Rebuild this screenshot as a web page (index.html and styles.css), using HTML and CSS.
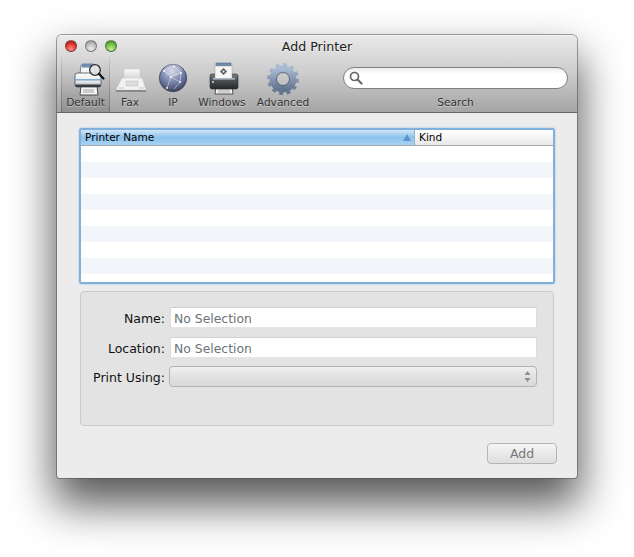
FILE: index.html
```html
<!DOCTYPE html>
<html lang="en">
<head>
<meta charset="utf-8">
<title>Add Printer</title>
<link rel="stylesheet" href="styles.css">
</head>
<body>
<main class="window">
  <header class="chrome">
    <div class="titlebar">
      <div class="lights">
        <span class="light light-red"></span>
        <span class="light light-grey"></span>
        <span class="light light-green"></span>
      </div>
      <h1 class="title">Add Printer</h1>
    </div>
    <div class="toolbar">
      <div class="tool tool-default">
        <svg class="tool-icon" viewBox="0 0 40 38">
          <defs>
            <linearGradient id="pb" x1="0" y1="0" x2="0" y2="1"><stop offset="0" stop-color="#fdfdfd"/><stop offset=".6" stop-color="#e8eaec"/><stop offset="1" stop-color="#a8aaac"/></linearGradient>
            <linearGradient id="pd" x1="0" y1="0" x2="0" y2="1"><stop offset="0" stop-color="#7a7f85"/><stop offset=".45" stop-color="#4b4f54"/><stop offset="1" stop-color="#26282b"/></linearGradient>
            <radialGradient id="gl" cx=".45" cy=".25" r=".85"><stop offset="0" stop-color="#c9cfe2"/><stop offset=".5" stop-color="#7581a8"/><stop offset="1" stop-color="#2c3148"/></radialGradient>
            <linearGradient id="gr" x1="0" y1="0" x2="0" y2="1"><stop offset="0" stop-color="#a9bad2"/><stop offset="1" stop-color="#63768f"/></linearGradient>
            <linearGradient id="fx" x1="0" y1="0" x2="0" y2="1"><stop offset="0" stop-color="#fafafa"/><stop offset="1" stop-color="#d6d6d6"/></linearGradient>
          </defs>
          <path d="M15 5h13l1 9H14z" fill="#f2f4f6" stroke="#56667c" stroke-width=".8"/>
          <rect x="16" y="3.500" width="11" height="4" fill="#6f8bab"/>
          <path d="M15 26h16l1 9H14z" fill="#f4f4f4" stroke="#3c3c3c" stroke-width=".9"/>
          <path d="M17 30h11M17 32h11" stroke="#a4a4a4"/>
          <rect x="9" y="13" width="26" height="14" rx="2.500" fill="url(#pb)" stroke="#4a4c50" stroke-width=".8"/>
          <rect x="9.500" y="19" width="25" height="1.600" fill="#86aece"/>
          <rect x="9.500" y="24.500" width="25" height="2.500" fill="#3a3c40"/>
          <circle cx="29" cy="10" r="5.300" fill="#e4e9ee" fill-opacity=".85" stroke="#2a2c2f" stroke-width="1.300"/>
          <path d="M33 14l4.500 4.500" stroke="#111" stroke-width="2.200" stroke-linecap="round"/>
        </svg>
        <span class="tool-label">Default</span>
      </div>
      <div class="tool tool-fax">
        <svg class="tool-icon" viewBox="0 0 40 38">
          <rect x="14" y="9" width="16" height="10" fill="url(#fx)" stroke="#c8c8c8" stroke-width=".5"/>
          <path d="M12 18h20l4 12H6z" fill="#f3f3f3" stroke="#cdcdcd" stroke-width=".5"/>
          <rect x="16" y="21" width="12" height="5" fill="#dedede" stroke="#bababa" stroke-width=".5"/>
          <rect x="6" y="30" width="30" height="2" fill="#8a8a8a"/>
          <path d="M9 28h5M29 28h5" stroke="#c2c2c2"/>
        </svg>
        <span class="tool-label">Fax</span>
      </div>
      <div class="tool tool-ip">
        <svg class="tool-icon" viewBox="0 0 40 38">
          <circle cx="20" cy="18" r="13.700" fill="url(#gl)" stroke="#2c3049" stroke-width=".6"/>
          <ellipse cx="20" cy="10" rx="9" ry="6" fill="#fff" fill-opacity=".22"/>
          <path d="M11 11l10-5 7 7-10 4-7-6zM18 17l-4 11M18 17l9 5 1-9M27 22l-6 7" fill="none" stroke="#e6eaf6" stroke-width=".5"/>
          <circle cx="21" cy="6.500" r=".9" fill="#fff"/><circle cx="11" cy="11" r=".9" fill="#fff"/><circle cx="28" cy="13" r=".9" fill="#fff"/><circle cx="18" cy="17" r=".9" fill="#fff"/><circle cx="27" cy="22" r=".9" fill="#fff"/><circle cx="14" cy="28" r=".9" fill="#fff"/>
        </svg>
        <span class="tool-label">IP</span>
      </div>
      <div class="tool tool-windows">
        <svg class="tool-icon" viewBox="0 0 40 38">
          <path d="M14 27h16l1 7H13z" fill="#f4f4f4" stroke="#333" stroke-width=".8"/>
          <path d="M16 30h12M16 32h12" stroke="#a8a8a8"/>
          <rect x="8" y="14" width="28" height="15" rx="2" fill="url(#pd)" stroke="#2a2a2a" stroke-width=".6"/>
          <rect x="14" y="3" width="15" height="4" fill="#6f8bab" stroke="#4f5f75" stroke-width=".5"/>
          <rect x="13" y="6" width="17" height="12.500" fill="#f6f6f6" stroke="#8f8f8f" stroke-width=".4"/>
          <rect x="11" y="18" width="22" height="1.600" fill="#a6b8ca"/>
          <path d="M21.500 8l3.500 3.500-3.500 3.500-3.500-3.500z" fill="#565656"/>
          <path d="M20.500 10.500h2v2h-2z" fill="#f0f0f0"/>
          <circle cx="11" cy="22" r="1" fill="#c9d6e4"/>
        </svg>
        <span class="tool-label">Windows</span>
      </div>
      <div class="tool tool-advanced">
        <svg class="tool-icon" viewBox="0 0 40 38">
          <circle cx="20" cy="19" r="13.300" fill="none" stroke="url(#gr)" stroke-width="5.400" pathLength="24" stroke-dasharray="1 1"/>
          <circle cx="20" cy="19" r="10" fill="none" stroke="url(#gr)" stroke-width="7"/>
          <circle cx="20" cy="19" r="6.500" fill="none" stroke="#46556b" stroke-width=".8"/>
        </svg>
        <span class="tool-label">Advanced</span>
      </div>
      <div class="search">
        <div class="search-box">
          <svg class="search-icon" viewBox="0 0 14 14">
            <circle cx="5.500" cy="5.500" r="4" fill="none" stroke="#666" stroke-width="1.700"/>
            <path d="M8.500 8.500l4 4" stroke="#666" stroke-width="2.200" stroke-linecap="round"/>
          </svg>
        </div>
        <span class="tool-label">Search</span>
      </div>
    </div>
  </header>

  <div class="content">
    <section class="table">
      <div class="thead">
        <div class="th th-name">Printer Name<span class="sort"></span></div>
        <div class="th th-kind">Kind</div>
      </div>
      <div class="tbody">
        <div class="row"></div><div class="row"></div><div class="row"></div>
        <div class="row"></div><div class="row"></div><div class="row"></div>
        <div class="row"></div><div class="row"></div><div class="row"></div>
      </div>
    </section>

    <section class="group">
      <div class="field">
        <label class="field-label">Name:</label>
        <div class="input">No Selection</div>
      </div>
      <div class="field">
        <label class="field-label">Location:</label>
        <div class="input">No Selection</div>
      </div>
      <div class="field field-popup">
        <label class="field-label">Print Using:</label>
        <div class="popup">
          <svg class="stepper" viewBox="0 0 7 11">
            <path d="M3.500 0L6.500 4H.5z" fill="#8e8e8e"/>
            <path d="M3.500 11L.5 7h6z" fill="#8e8e8e"/>
          </svg>
        </div>
      </div>
    </section>

    <footer class="actions">
      <button class="add" type="button">Add</button>
    </footer>
  </div>
</main>
</body>
</html>
```

FILE: styles.css
```css
* { box-sizing: border-box; }

html, body { margin: 0; height: 100%; overflow: hidden; }

body {
  background: #fff;
  padding: 35px 57px 0;
  font-family: "DejaVu Sans", "Liberation Sans", sans-serif;
  color: #000;
}

.window {
  width: 520px;
  height: 443px;
  display: flex;
  flex-direction: column;
  background: #ececec;
  border-radius: 5px 5px 3px 3px;
  box-shadow: 0 0 0 1px rgba(70, 70, 70, .5), 0 24px 44px 3px rgba(0, 0, 0, .66);
  overflow: hidden;
}

.chrome {
  height: 78px;
  flex: none;
  display: flex;
  flex-direction: column;
  background: linear-gradient(#e9e9e9, #cbcbcb 50%, #a5a5a5);
  border-top: 1px solid #f4f4f4;
  border-bottom: 1px solid #656565;
}

.titlebar {
  height: 21px;
  flex: none;
  display: flex;
  align-items: center;
  justify-content: center;
  position: relative;
}

.lights {
  position: absolute;
  left: 8px;
  top: 4px;
  display: flex;
  gap: 8px;
}

.light {
  width: 12px;
  height: 12px;
  border-radius: 50%;
  border: 1px solid rgba(70, 70, 70, .55);
}

.light-red { background: radial-gradient(circle at 50% 80%, #ff8f8a, #e0342c 55%, #8f1a18); }
.light-grey { background: radial-gradient(circle at 50% 80%, #ededed, #bdbdbd 55%, #8f8f8f); }
.light-green { background: radial-gradient(circle at 50% 80%, #c8f08f, #6cbd40 55%, #3d7f26); }

.title {
  margin: 0;
  font-size: 12.6px;
  font-weight: 400;
  color: #222;
  text-shadow: 0 1px 0 rgba(255, 255, 255, .5);
}

.toolbar {
  flex: 1;
  display: flex;
  padding-left: 4px;
}

.tool {
  display: flex;
  flex-direction: column;
  align-items: center;
  padding-top: 3px;
}

.tool-icon {
  width: 40px;
  height: 38px;
  flex: none;
  margin-bottom: -2px;
  overflow: visible;
}

.tool-label {
  font-size: 10.6px;
  line-height: 13px;
  color: #333;
  white-space: nowrap;
  text-shadow: 0 1px 0 rgba(255, 255, 255, .4);
}

.tool-default {
  width: 49px;
  background: linear-gradient(rgba(0, 0, 0, 0), rgba(0, 0, 0, .12));
  border-left: 1px solid;
  border-right: 1px solid;
  border-image: linear-gradient(rgba(90, 90, 90, .1), rgba(90, 90, 90, .55)) 1;
}

.tool-fax { width: 40px; }
.tool-ip { width: 46px; }
.tool-windows { width: 52px; }
.tool-advanced { width: 70px; }

.search {
  width: 225px;
  margin-left: 25px;
  display: flex;
  flex-direction: column;
  align-items: center;
  padding-top: 10px;
  gap: 7px;
}

.search-box {
  width: 100%;
  height: 22px;
  flex: none;
  display: flex;
  align-items: center;
  padding-left: 5px;
  background: linear-gradient(#ececec, #fff 30%);
  border: 1px solid #808080;
  border-radius: 11px;
}

.search-icon { width: 14px; height: 14px; }

.content {
  flex: 1;
  padding: 15px 0 0 22px;
  display: flex;
  flex-direction: column;
}

.table {
  width: 476px;
  height: 156px;
  flex: none;
  display: flex;
  flex-direction: column;
  border: 2px solid #7fb1dc;
  border-radius: 3px;
  box-shadow: 0 0 2px rgba(110, 165, 215, .7);
  overflow: hidden;
  background: #fff;
}

.thead { display: flex; height: 16px; flex: none; border-bottom: 1px solid #a8a8a8; }

.th {
  font-size: 10.5px;
  line-height: 15px;
  padding-left: 4px;
  display: flex;
  align-items: center;
}

.th-name {
  width: 334px;
  position: relative;
  background: linear-gradient(#d2e6f7, #8cc2ec 50%, #a9d3f2);
  border-right: 1px solid #8fb4d4;
}

.th-kind { flex: 1; background: linear-gradient(#fff, #e8e8e8); }

.sort {
  position: absolute;
  right: 3px;
  top: 4px;
  width: 0;
  height: 0;
  border-left: 4px solid transparent;
  border-right: 4px solid transparent;
  border-bottom: 7px solid #5c94c8;
}

.tbody { flex: 1; overflow: hidden; }

.row { height: 16px; background: #fff; }
.row:nth-child(even) { background: #f2f5f9; }

.group {
  width: 474px;
  height: 135px;
  flex: none;
  margin: 7px 0 0 1px;
  padding: 15px 16px 0 0;
  display: flex;
  flex-direction: column;
  gap: 9px;
  background: #e3e3e3;
  border: 1px solid #cbcbcb;
  border-radius: 4px;
}

.field { display: flex; align-items: center; height: 21px; }
.field-popup { margin-top: -1px; }

.field-label {
  width: 84px;
  flex: none;
  padding-top: 2px;
  text-align: right;
  font-size: 12.5px;
  color: #111;
}

.input {
  flex: 1;
  height: 21px;
  margin-left: 5px;
  padding-left: 3px;
  font-size: 12.4px;
  line-height: 21px;
  color: #6d7378;
  background: #fff;
  border-top: 1px solid #d0d0d0;
  border-left: 1px solid #dcdcdc;
  border-right: 1px solid #dcdcdc;
  border-bottom: 1px solid #e6e6e6;
}

.popup {
  flex: 1;
  height: 21px;
  margin-left: 4px;
  display: flex;
  align-items: center;
  justify-content: flex-end;
  padding-right: 5px;
  background: linear-gradient(#f0f0f0, #e2e2e2 50%, #dadada);
  border: 1px solid #b2b2b2;
  border-radius: 4px;
}

.stepper { width: 7px; height: 11px; }

.actions {
  display: flex;
  justify-content: flex-end;
  padding: 17px 20px 0 0;
}

.add {
  width: 70px;
  height: 21px;
  padding: 0;
  font-family: inherit;
  font-size: 12.5px;
  color: #777;
  background: linear-gradient(#f5f5f5, #e9e9e9 50%, #dfdfdf);
  border: 1px solid #b5b5b5;
  border-radius: 4px;
}
```
